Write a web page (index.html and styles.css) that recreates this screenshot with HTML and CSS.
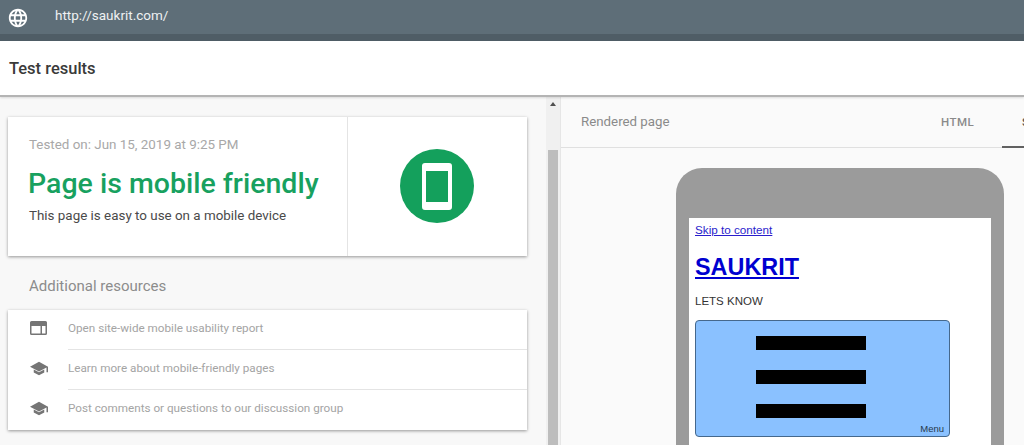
FILE: index.html
```html
<!DOCTYPE html>
<html lang="en">
<head>
  <meta charset="UTF-8">
  <meta name="viewport" content="width=device-width, initial-scale=1">
  <title>Mobile-Friendly Test</title>
  <link rel="stylesheet" href="styles.css">
</head>
<body>
  <div class="url-bar">
    <svg class="globe" viewBox="0 0 24 24"><path fill="#fff" d="M11.99 2C6.47 2 2 6.48 2 12s4.47 10 9.99 10C17.52 22 22 17.52 22 12S17.52 2 11.99 2zm6.93 6h-2.95a15.65 15.65 0 0 0-1.38-3.56A8.03 8.03 0 0 1 18.92 8zM12 4.04c.83 1.2 1.48 2.53 1.91 3.96h-3.82c.43-1.43 1.08-2.76 1.91-3.96zM4.26 14C4.1 13.36 4 12.69 4 12s.1-1.36.26-2h3.38c-.08.66-.14 1.32-.14 2s.06 1.34.14 2H4.26zm.82 2h2.95c.32 1.25.78 2.45 1.38 3.56A7.987 7.987 0 0 1 5.08 16zm2.95-8H5.08a7.987 7.987 0 0 1 4.33-3.56A15.65 15.65 0 0 0 8.03 8zM12 19.96c-.83-1.2-1.48-2.53-1.91-3.96h3.82c-.43 1.43-1.08 2.76-1.91 3.96zM14.34 14H9.66c-.09-.66-.16-1.32-.16-2s.07-1.35.16-2h4.68c.09.65.16 1.32.16 2s-.07 1.34-.16 2zm.25 5.56c.6-1.11 1.06-2.31 1.38-3.56h2.95a8.03 8.03 0 0 1-4.33 3.56zM16.36 14c.08-.66.14-1.32.14-2s-.06-1.34-.14-2h3.38c.16.64.26 1.31.26 2s-.1 1.36-.26 2h-3.38z"/></svg>
    <span class="url-text">http://saukrit.com/</span>
  </div>
  <div class="results-header">Test results</div>
  <div class="panes">
    <div class="left-pane">
      <div class="verdict-card">
        <div class="verdict-info">
          <div class="tested-on">Tested on: Jun 15, 2019 at 9:25 PM</div>
          <div class="verdict-title">Page is mobile friendly</div>
          <div class="verdict-sub">This page is easy to use on a mobile device</div>
        </div>
        <div class="verdict-icon">
          <div class="green-circle"><div class="phone-icon"></div></div>
        </div>
      </div>
      <div class="resources-title">Additional resources</div>
      <div class="resources-card">
        <div class="resource-row">
          <svg class="resource-icon" viewBox="0 0 18 15"><path fill="#757575" fill-rule="evenodd" d="M1.5 0h14A1.500 1.500 0 0 1 17 1.500v11a1.500 1.500 0 0 1-1.500 1.500h-14A1.500 1.500 0 0 1 0 12.500v-11A1.500 1.500 0 0 1 1.500 0zM1.500 5v7.500h9V5zm10.500 0v7.500h3.500V5z"/></svg>
          <div class="resource-text">Open site-wide mobile usability report</div>
        </div>
        <div class="resource-row">
          <svg class="resource-icon" viewBox="0 0 24 20"><path fill="#757575" d="M5 11.180v4L12 19l7-3.820v-4L12 15zM12 1 0 7.500 12 14l10-5.400V15h2V7.500z"/></svg>
          <div class="resource-text">Learn more about mobile-friendly pages</div>
        </div>
        <div class="resource-row">
          <svg class="resource-icon" viewBox="0 0 24 20"><path fill="#757575" d="M5 11.180v4L12 19l7-3.820v-4L12 15zM12 1 0 7.500 12 14l10-5.400V15h2V7.500z"/></svg>
          <div class="resource-text">Post comments or questions to our discussion group</div>
        </div>
      </div>
    </div>
    <div class="scrollbar">
      <div class="scroll-arrow"></div>
      <div class="scroll-thumb"></div>
    </div>
    <div class="right-pane">
      <div class="tabs-bar">
        <div class="tabs-title">Rendered page</div>
        <div class="tab">HTML</div>
        <div class="tab tab-active">SCREENSHOT</div>
      </div>
      <div class="phone-frame">
        <div class="phone-screen">
          <a class="skip-link" href="#">Skip to content</a>
          <a class="site-title" href="#">SAUKRIT</a>
          <div class="site-tagline">LETS KNOW</div>
          <div class="menu-box">
            <div class="menu-bar"></div>
            <div class="menu-bar"></div>
            <div class="menu-bar"></div>
            <span class="menu-label">Menu</span>
          </div>
        </div>
      </div>
    </div>
  </div>
</body>
</html>
```

FILE: styles.css
```css
html, body {
  height: 100%;
}
body {
  margin: 0;
  background: #f8f8f8;
  font-family: Roboto, Arial, sans-serif;
  overflow: hidden;
  display: flex;
  flex-direction: column;
}
.url-bar {
  height: 34px;
  flex: none;
  background: #5e6e78;
  border-bottom: 7px solid #4f5d66;
  display: flex;
  align-items: center;
  color: #eef1f2;
  font-size: 13.5px;
}
.globe {
  width: 22px;
  height: 22px;
  margin-left: 7px;
  margin-top: 1px;
}
.url-text {
  margin-left: 26px;
  margin-top: -4px;
}
.results-header {
  height: 54px;
  flex: none;
  background: #fff;
  display: flex;
  align-items: center;
  padding-left: 9px;
  font-size: 16.5px;
  font-weight: 500;
  color: #3a3a3a;
  border-bottom: 2px solid #b4b4b4;
  box-shadow: 0 1px 2px rgba(0,0,0,0.12);
  position: relative;
}
.panes {
  flex: 1;
  display: flex;
  min-height: 0;
}
.left-pane {
  width: 546px;
  flex: none;
  padding: 20px 19px 0 8px;
  box-sizing: border-box;
}
.verdict-card {
  height: 139px;
  background: #fff;
  box-shadow: 0 1px 3px rgba(0,0,0,0.4);
  display: flex;
}
.verdict-info {
  width: 340px;
  flex: none;
  box-sizing: border-box;
  padding: 20px 0 0 21px;
  border-right: 1px solid #e4e4e4;
}
.tested-on {
  font-size: 13.4px;
  color: #a8a8a8;
}
.verdict-title {
  font-size: 28.5px;
  font-weight: 500;
  color: #18a15f;
  margin-top: 15px;
  margin-left: -1px;
}
.verdict-sub {
  font-size: 13.4px;
  color: #4a4a4a;
  margin-top: 8px;
}
.verdict-icon {
  flex: 1;
  display: flex;
  justify-content: center;
  padding: 32px 2px 0 0;
}
.green-circle {
  width: 74px;
  height: 74px;
  border-radius: 50%;
  background: #14a05c;
  display: flex;
  align-items: center;
  justify-content: center;
}
.phone-icon {
  width: 22px;
  height: 31px;
  border: solid #fff;
  border-width: 8px 4px;
  border-radius: 3px;
  background: #14a05c;
}
.resources-title {
  font-size: 15px;
  color: #8c8c8c;
  padding-left: 21px;
  margin-top: 21px;
  height: 33px;
}
.resources-card {
  background: #fff;
  box-shadow: 0 1px 3px rgba(0,0,0,0.4);
}
.resource-row {
  height: 40px;
  display: flex;
  align-items: center;
}
.resource-icon {
  width: 18px;
  height: 15px;
  margin-left: 22px;
  margin-bottom: 4px;
  flex: none;
}
.resource-text {
  margin-left: 20px;
  flex: 1;
  align-self: stretch;
  display: flex;
  align-items: center;
  padding-bottom: 4px;
  font-size: 11.7px;
  color: #a4a4a4;
  border-bottom: 1px solid #e4e4e4;
}
.resource-row:last-child .resource-text {
  border-bottom: none;
}
.scrollbar {
  width: 14px;
  flex: none;
  background: #f0f0f0;
  border-right: 1px solid #e6e6e6;
}
.scroll-arrow {
  width: 0;
  height: 0;
  margin: 5px auto 0;
  border: 3px solid transparent;
  border-top: none;
  border-bottom: 4px solid #505050;
}
.scroll-thumb {
  margin: 44px 2px 0;
  height: 300px;
  background: #bdbdbd;
}
.right-pane {
  flex: 1;
  min-width: 0;
  overflow: hidden;
  background: #fafafa;
}
.tabs-bar {
  height: 50px;
  display: flex;
  border-bottom: 1px solid #e0e0e0;
  margin-right: -60px;
  font-size: 11.5px;
  color: #8a8a8a;
}
.tabs-title {
  font-size: 13.3px;
  padding: 17px 0 0 20px;
  width: 380px;
  flex: none;
  box-sizing: border-box;
}
.tab {
  padding: 18px 0 0;
  font-weight: 500;
  letter-spacing: 0.5px;
  width: 61px;
  flex: none;
}
.tab-active {
  color: #555;
  padding-left: 20px;
  border-bottom: 2px solid #616161;
  height: 31px;
  width: 120px;
}
.phone-frame {
  width: 328px;
  margin: 20px 0 0 115px;
  padding: 50px 13px 0;
  box-sizing: border-box;
  background: #9b9b9b;
  border-radius: 26px 26px 0 0;
  height: 300px;
}
.phone-screen {
  background: #fff;
  height: 100%;
  padding: 5px 6px 0;
  font-family: "Liberation Sans", Arial, sans-serif;
}
.skip-link {
  display: block;
  font-size: 11.7px;
  color: #2a1dcc;
}
.site-title {
  display: block;
  margin-top: 18px;
  font-size: 23.4px;
  font-weight: 700;
  color: #0000d0;
}
.site-tagline {
  font-size: 11.5px;
  color: #333;
  margin-top: 14px;
}
.menu-box {
  position: relative;
  width: 255px;
  height: 117px;
  margin-top: 13px;
  background: #8ac1ff;
  border: 1px solid #45688c;
  border-radius: 4px;
  box-sizing: border-box;
  padding-top: 15px;
  display: flex;
  flex-direction: column;
  gap: 20px;
}
.menu-bar {
  width: 110px;
  height: 14px;
  margin-left: 60px;
  background: #000;
}
.menu-label {
  position: absolute;
  right: 5px;
  bottom: 2px;
  font-size: 9.5px;
  color: #28384a;
}
```
